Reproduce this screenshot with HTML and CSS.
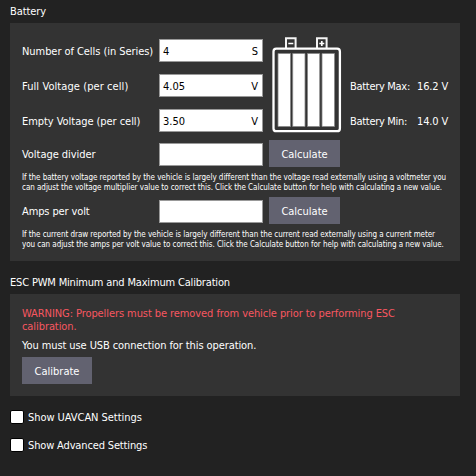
FILE: index.html
```html
<!DOCTYPE html>
<html lang="en">
<head>
<meta charset="utf-8">
<title>Power Setup</title>
<link rel="stylesheet" href="styles.css">
</head>
<body>
<main class="page">
  <h2 class="heading battery-heading">Battery</h2>
  <section class="panel battery">
    <div class="specs">
      <div class="fields">
        <label class="row"><span class="name cells">Number of Cells (in Series)</span><span class="input"><span>4</span><span>S</span></span></label>
        <label class="row"><span class="name full">Full Voltage (per cell)</span><span class="input"><span>4.05</span><span>V</span></span></label>
        <label class="row"><span class="name empty">Empty Voltage (per cell)</span><span class="input"><span>3.50</span><span>V</span></span></label>
      </div>
      <svg class="pack" width="70" height="97" viewBox="0 0 70 97" fill="none">
        <path d="M14 12V2.3h9.6V12M45 12V2.3h9.6V12" stroke="#f4f4f4" stroke-width="2"/>
        <path d="M16.3 7.5h5M47.3 7.5h5M49.8 5v5" stroke="#fff" stroke-width="1.7"/>
        <rect x="1.5" y="12.6" width="66.4" height="82.6" rx="2.8" stroke="#fff" stroke-width="2.3"/>
        <path d="M6 17.5h12.5v73H6zM20.7 17.5H33v73H20.7zM35.5 17.5H47.7v73H35.5zM50 17.5h12.5v73H50z" fill="#fff" stroke="#888" stroke-width=".8"/>
      </svg>
      <dl class="totals">
        <dt>Battery Max:</dt><dd>16.2 V</dd>
        <dt>Battery Min:</dt><dd>14.0 V</dd>
      </dl>
    </div>
    <div class="row calc"><span class="name divider">Voltage divider</span><span class="input"></span><button class="button">Calculate</button></div>
    <p class="hint">If the battery voltage reported by the vehicle is largely different than the voltage read externally using a voltmeter you<br>can adjust the voltage multiplier value to correct this. Click the Calculate button for help with calculating a new value.</p>
    <div class="row calc"><span class="name">Amps per volt</span><span class="input"></span><button class="button">Calculate</button></div>
    <p class="hint">If the current draw reported by the vehicle is largely different than the current read externally using a current meter<br>you can adjust the amps per volt value to correct this. Click the Calculate button for help with calculating a new value.</p>
  </section>
  <h2 class="heading esc-heading">ESC PWM Minimum and Maximum Calibration</h2>
  <section class="panel esc">
    <p class="warning">WARNING: Propellers must be removed from vehicle prior to performing ESC<br>calibration.</p>
    <p class="note">You must use USB connection for this operation.</p>
    <button class="button calibrate">Calibrate</button>
  </section>
  <label class="check"><span class="box"></span><span class="uavcan">Show UAVCAN Settings</span></label>
  <label class="check"><span class="box"></span>Show Advanced Settings</label>
</main>
</body>
</html>
```
FILE: styles.css
```css
* { box-sizing: border-box; }
body {
  margin: 0;
  height: 476px;
  overflow: hidden;
  background: #222;
  color: #fff;
  font: 11px/13px "DejaVu Sans Condensed", "DejaVu Sans", sans-serif;
  letter-spacing: -0.12px;
  white-space: nowrap;
}
.page { padding: 5px 16px 0 10px; }
.heading { margin: 0; height: 18px; font-size: inherit; font-weight: normal; letter-spacing: -0.17px; }
.battery-heading { letter-spacing: -0.1px; }
.panel { background: #333; padding: 0 12px; }
.battery { height: 238px; padding-top: 16px; }
.specs { display: flex; height: 101px; }
.fields { display: flex; flex-direction: column; gap: 12px; width: 241px; }
.row { display: flex; align-items: center; height: 23px; }
.name { width: 137px; padding-top: 2px; }
.cells { letter-spacing: -0.06px; }
.full { letter-spacing: 0.08px; }
.empty { letter-spacing: -0.05px; }
.divider { letter-spacing: -0.05px; }
.input {
  display: flex;
  justify-content: space-between;
  align-items: center;
  width: 104px;
  height: 23px;
  padding: 2px 4px 0 3px;
  background: #fff;
  border: 1px solid #999;
  color: #000;
  letter-spacing: 0;
}
.pack { margin: -3px 0 0 9px; flex: none; }
.totals {
  display: grid;
  grid-template-columns: 67px auto;
  row-gap: 22px;
  align-content: start;
  margin: 41px 0 0 8px;
  letter-spacing: -0.3px;
}
.totals dd { margin: 0; letter-spacing: -0.15px; }
.calc { height: 27px; }
.calc .input { margin-top: 2px; }
.button {
  width: 71px;
  height: 27px;
  margin: 0 0 0 6px;
  padding: 1px 0 0;
  border: 0;
  background: #626270;
  color: #fff;
  font: inherit;
  letter-spacing: 0;
}
.hint { margin: 6px 0 4px; height: 20px; font-size: 8px; line-height: 10px; letter-spacing: -0.053px; }
.esc-heading { margin-top: 15px; }
.esc { height: 102px; padding-top: 13px; }
.warning { margin: 0; color: #f85761; letter-spacing: -0.08px; }
.note { margin: 6px 0 5px; letter-spacing: -0.09px; }
.calibrate { display: block; width: 70px; margin: 0; }
.check { display: flex; align-items: center; gap: 4px; height: 14px; margin-top: 14px; letter-spacing: -0.15px; }
.uavcan { letter-spacing: -0.05px; }
.box { width: 14px; height: 14px; background: #fff; border: 1px solid #000; border-radius: 2px; }
```
